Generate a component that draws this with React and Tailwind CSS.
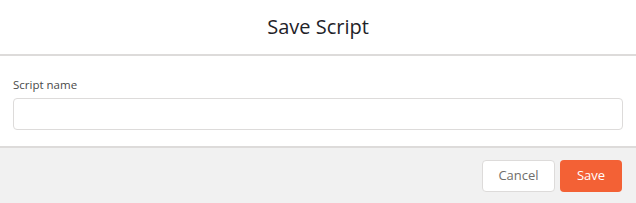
export default function App() {
  return (
    <div className="w-[636px] h-[203px] bg-white flex flex-col" style={{ fontFamily: '"Open Sans", "Noto Sans", sans-serif' }}>
      <div className="h-[56px] flex items-center justify-center border-b-2 border-[#dddbda]">
        <h1 className="text-[20px] text-[#1f2329] font-normal leading-none">Save Script</h1>
      </div>
      <div className="px-[13px] pt-[23px] pb-[16px]">
        <label className="block text-[11.5px] text-[#4a4a4a] leading-none mb-[7px]">Script name</label>
        <input type="text" className="block w-full h-[32px] border border-[#dddbda] rounded-[4px] px-3 text-[13px] outline-none" />
      </div>
      <div className="flex-1 bg-[#f1f1f1] border-t-2 border-[#dddbda] flex items-start justify-end gap-[5px] pt-[12px] pr-[14px]">
        <button className="h-[32px] w-[73px] bg-white border border-[#dddbda] rounded-[4px] text-[13px] text-[#706e6b]">Cancel</button>
        <button className="h-[32px] w-[62px] bg-[#f36135] rounded-[4px] text-[13px] text-white">Save</button>
      </div>
    </div>
  );
}
